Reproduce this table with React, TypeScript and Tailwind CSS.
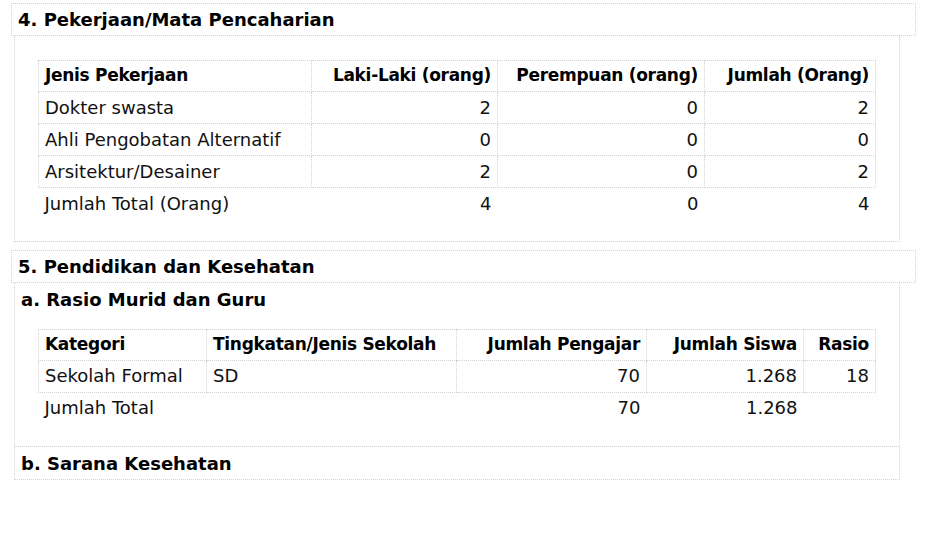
import React from 'react';

type Row = { cells: string[]; total?: boolean };

const pekerjaan: Row[] = [
  { cells: ['Dokter swasta', '2', '0', '2'] },
  { cells: ['Ahli Pengobatan Alternatif', '0', '0', '0'] },
  { cells: ['Arsitektur/Desainer', '2', '0', '2'] },
  { cells: ['Jumlah Total (Orang)', '4', '0', '4'], total: true },
];

const rasio: Row[] = [
  { cells: ['Sekolah Formal', 'SD', '70', '1.268', '18'] },
  { cells: ['Jumlah Total', '', '70', '1.268', ''], total: true },
];

const cell = 'border border-dotted border-[#d4d4d4] px-[6px]';

const DataTable: React.FC<{ heads: string[]; widths: string[]; rows: Row[]; leftCols: number }> = ({ heads, widths, rows, leftCols }) => (
  <table className="w-[837px] border-collapse table-fixed">
    <colgroup>
      {widths.map((w, i) => (
        <col key={i} className={w} />
      ))}
    </colgroup>
    <thead>
      <tr className="h-[31px]">
        {heads.map((h, i) => (
          <th key={i} className={`${cell} text-[17px] tracking-[-0.3px] font-bold text-black whitespace-nowrap ${i < leftCols ? 'text-left' : 'text-right'}`}>
            {h}
          </th>
        ))}
      </tr>
    </thead>
    <tbody>
      {rows.map((r, ri) => (
        <tr key={ri} className="h-[32px]">
          {r.cells.map((c, i) => (
            <td
              key={i}
              className={`${r.total ? 'px-[6px]' : cell} py-0 leading-[20px] whitespace-nowrap ${i < leftCols ? 'text-left' : 'text-right'}`}
            >
              {c}
            </td>
          ))}
        </tr>
      ))}
    </tbody>
  </table>
);

const SectionHeader: React.FC<{ title: string }> = ({ title }) => (
  <div className="mx-[11px] h-[33px] flex items-center pl-[6px] border border-dotted border-[#d0d0d0] font-bold text-black">
    {title}
  </div>
);

export default function App() {
  return (
    <div className="w-[927px] h-[534px] bg-white text-[18px] text-[#111] pt-[3px]" style={{ fontFamily: '"DejaVu Sans", Verdana, sans-serif' }}>
      <SectionHeader title="4. Pekerjaan/Mata Pencaharian" />
      <div className="mx-[14px] w-[886px] border-x border-b border-dotted border-[#d4d4d4] px-[23px] pt-[24px] pb-[21px]">
        <DataTable
          heads={['Jenis Pekerjaan', 'Laki-Laki (orang)', 'Perempuan (orang)', 'Jumlah (Orang)']}
          widths={['w-[273px]', 'w-[186px]', 'w-[207px]', 'w-[171px]']}
          rows={pekerjaan}
          leftCols={1}
        />
      </div>

      <div className="h-[8px]" />
      <SectionHeader title="5. Pendidikan dan Kesehatan" />
      <div className="mx-[14px] w-[886px] border-x border-b border-dotted border-[#d4d4d4]">
        <div className="h-[34px] flex items-center pl-[6px] font-bold text-black">a. Rasio Murid dan Guru</div>
        <div className="px-[23px] pt-[12px] pb-[22px]">
          <DataTable
            heads={['Kategori', 'Tingkatan/Jenis Sekolah', 'Jumlah Pengajar', 'Jumlah Siswa', 'Rasio']}
            widths={['w-[168px]', 'w-[250px]', 'w-[190px]', 'w-[157px]', 'w-[72px]']}
            rows={rasio}
            leftCols={2}
          />
        </div>
        <div className="h-[33px] flex items-center pl-[6px] font-bold text-black border-t border-dotted border-[#d4d4d4]">
          b. Sarana Kesehatan
        </div>
      </div>
    </div>
  );
}
